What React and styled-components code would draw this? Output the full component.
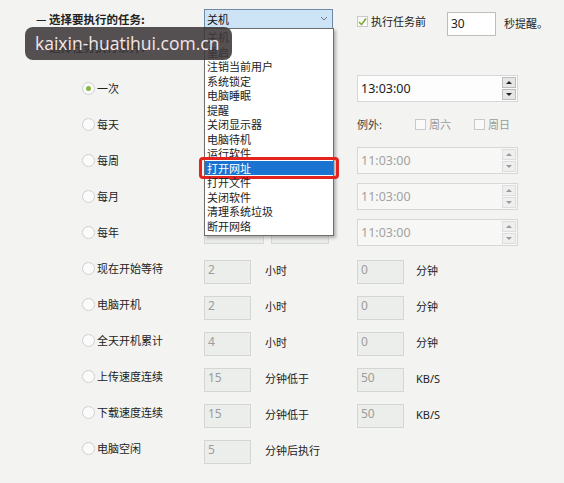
import styled, { createGlobalStyle } from 'styled-components';

const GlobalStyle = createGlobalStyle`
  html, body {
    margin: 0;
    padding: 0;
    background: #f3f4f1;
  }
  body {
    font-family: "Noto Sans CJK SC", "Noto Sans", sans-serif;
    color: #222;
  }
`;

const Page = styled.div`
  position: relative;
  width: 564px;
  height: 483px;
  overflow: hidden;
  background: #f3f4f1;
`;

const Header = styled.div`
  display: flex;
  align-items: flex-start;
  padding-top: 9px;
  height: 28px;
`;
const Heading = styled.div`
  width: 168px;
  margin-left: 36px;
  font-size: 11.5px;
  font-weight: bold;
  line-height: 20px;
  color: #222;
`;
const SubHeading = styled(Heading)`
  margin-top: 3px;
  line-height: 14px;
`;

const Combo = styled.div`
  position: relative;
  box-sizing: border-box;
  width: 129px;
  height: 20px;
  padding-left: 2px;
  border: 1px solid #6f8aa8;
  background: #cde3f6;
  font-size: 11px;
  line-height: 18px;
  color: #111;
`;
const Chevron = styled.svg`
  position: absolute;
  right: 4px;
  top: 6px;
`;
const List = styled.ul`
  position: absolute;
  z-index: 10;
  top: 18px;
  left: -1px;
  box-sizing: border-box;
  width: 130px;
  margin: 0;
  padding: 1px 0 2px;
  list-style: none;
  background: #fff;
  border: 1px solid #6e6e6e;
  box-shadow: 2px 2px 3px rgba(0, 0, 0, 0.28);
`;
const Item = styled.li`
  position: relative;
  height: 14.5px;
  padding-left: 2px;
  font-size: 11px;
  line-height: 14.5px;
  color: ${(p) => (p.$selected ? '#fff' : '#222')};
  background: ${(p) => (p.$selected ? '#1a73d1' : 'transparent')};

  ${(p) =>
    p.$selected &&
    `
    &::after {
      content: '';
      position: absolute;
      inset: -4px -6px -4px -6px;
      border: 3px solid #e2231f;
      border-radius: 4px;
    }
  `}
`;

const CheckLabel = styled.label`
  display: flex;
  align-items: center;
  gap: 3px;
  width: ${(p) => p.$width || 'auto'};
  margin-left: ${(p) => p.$left || '0'};
  margin-top: ${(p) => p.$top || '0'};
  font-size: 11px;
  line-height: 16px;
  color: ${(p) => (p.$muted ? '#9a9a9a' : '#222')};
`;
const Box = styled.span`
  display: inline-flex;
  align-items: center;
  justify-content: center;
  box-sizing: border-box;
  width: 11px;
  height: 11px;
  border: 1px solid #c9c9c9;
  background: #fafafa;
`;
const SecondsInput = styled.div`
  box-sizing: border-box;
  width: 49px;
  height: 24px;
  margin-top: 3px;
  padding-left: 3px;
  border: 1px solid #bdbdbd;
  background: #fff;
  font-family: "Noto Sans", sans-serif;
  font-size: 12px;
  line-height: 22px;
`;
const Text = styled.span`
  margin-left: ${(p) => p.$left || '0'};
  margin-top: ${(p) => p.$top || '0'};
  font-size: 11px;
  line-height: 16px;
  color: #222;
`;

const Rows = styled.div`
  margin-top: 16px;
`;
const Row = styled.div`
  display: flex;
  align-items: center;
  height: 36px;
  padding-left: 82px;
`;
const RadioCell = styled.label`
  display: flex;
  align-items: center;
  gap: 2px;
  width: 122px;
  font-size: 11px;
  color: #222;
`;
const Radio = styled.span`
  position: relative;
  box-sizing: border-box;
  width: 13px;
  height: 13px;
  border: 1px solid #cfcfcf;
  border-radius: 50%;
  background: #fbfbfb;

  ${(p) =>
    p.$checked &&
    `
    &::after {
      content: '';
      position: absolute;
      inset: 3px;
      border-radius: 50%;
      background: #86b83d;
    }
  `}
`;
const Middle = styled.div`
  display: flex;
  gap: 7px;
  width: 153px;
  align-self: flex-start;
  margin-top: ${(p) => p.$top || '0'};
`;
const DateBox = styled.div`
  box-sizing: border-box;
  width: ${(p) => p.$width};
  height: 26px;
  border: 1px solid #d6d8d5;
  background: #e9ebe8;
`;
const ValueBox = styled.div`
  box-sizing: border-box;
  width: 47px;
  height: 24px;
  align-self: flex-start;
  margin-top: 10px;
  padding: 1px 0 0 3px;
  border: 1px solid #d3d6d2;
  background: #eceeeb;
  font-family: "Noto Sans", sans-serif;
  font-size: 12px;
  line-height: 16px;
  color: #9c9c9c;
`;
const Unit = styled.span`
  width: ${(p) => p.$width || 'auto'};
  margin-left: ${(p) => p.$left || '0'};
  margin-top: 4px;
  font-size: 11px;
  color: #222;
  font-family: ${(p) => (p.$latin ? '"Noto Sans", sans-serif' : 'inherit')};
`;

const TimeField = styled.div`
  display: flex;
  align-items: center;
  justify-content: space-between;
  box-sizing: border-box;
  width: 161px;
  height: 27px;
  padding: 0 1px 0 3px;
  border: 1px solid #d7d7d7;
  background: ${(p) => (p.$disabled ? '#f7f7f6' : '#fdfdfd')};
  font-family: "Noto Sans", sans-serif;
  font-size: 12.5px;
  color: ${(p) => (p.$disabled ? '#a2a2a2' : '#1a1a1a')};
`;
const Spin = styled.div`
  display: flex;
  flex-direction: column;
  gap: 1px;
`;
const SpinButton = styled.span`
  position: relative;
  box-sizing: border-box;
  width: 14px;
  height: 11px;
  border: 1px solid ${(p) => (p.$disabled ? '#dedede' : '#bdbdbd')};
  background: ${(p) => (p.$disabled ? '#efefef' : '#e6e6e6')};

  &::after {
    content: '';
    position: absolute;
    left: 3px;
    top: 3px;
    border-left: 3px solid transparent;
    border-right: 3px solid transparent;
    ${(p) => (p.$down ? 'border-top' : 'border-bottom')}: 3px solid
      ${(p) => (p.$disabled ? '#9a9a9a' : '#222')};
  }
`;
const ExceptRow = styled.div`
  display: flex;
  align-items: center;
  font-size: 11px;
  color: #444;
`;

const Watermark = styled.div`
  position: absolute;
  z-index: 20;
  left: 25px;
  top: 27px;
  box-sizing: border-box;
  width: 207px;
  height: 33px;
  padding-left: 10px;
  border-radius: 8px;
  background: rgba(62, 56, 58, 0.88);
  font-family: "Open Sans", "Noto Sans", sans-serif;
  font-size: 17.5px;
  line-height: 33px;
  color: #f4e6e6;
  white-space: nowrap;
`;

const tasks = [
  '关机',
  '重启',
  '注销当前用户',
  '系统锁定',
  '电脑睡眠',
  '提醒',
  '关闭显示器',
  '电脑待机',
  '运行软件',
  '打开网址',
  '打开文件',
  '关闭软件',
  '清理系统垃圾',
  '断开网络',
];

const Check = () => (
  <svg width="9" height="9" viewBox="0 0 9 9">
    <polyline points="1,5 3.5,7.5 8,1.5" fill="none" stroke="#7cb02c" strokeWidth="1.6" />
  </svg>
);

const Time = ({ value, disabled }) => (
  <TimeField $disabled={disabled}>
    <span>{value}</span>
    <Spin>
      <SpinButton $disabled={disabled} />
      <SpinButton $disabled={disabled} $down />
    </Spin>
  </TimeField>
);

const waits = [
  { label: '现在开始等待', a: '2', mid: '小时', b: '0', unit: '分钟' },
  { label: '电脑开机', a: '2', mid: '小时', b: '0', unit: '分钟' },
  { label: '全天开机累计', a: '4', mid: '小时', b: '0', unit: '分钟' },
  { label: '上传速度连续', a: '15', mid: '分钟低于', b: '50', unit: 'KB/S' },
  { label: '下载速度连续', a: '15', mid: '分钟低于', b: '50', unit: 'KB/S' },
  { label: '电脑空闲', a: '5', mid: '分钟后执行' },
];

export default function App() {
  return (
    <Page>
      <GlobalStyle />
      <Header>
        <Heading>— 选择要执行的任务:</Heading>
        <Combo>
          关机
          <Chevron width="8" height="6" viewBox="0 0 8 6">
            <polyline points="1,1 4,4 7,1" fill="none" stroke="#777" strokeWidth="1" />
          </Chevron>
          <List>
            {tasks.map((t) => (
              <Item key={t} $selected={t === '打开网址'}>
                {t}
              </Item>
            ))}
          </List>
        </Combo>
        <CheckLabel $left="24px" $top="4px" $width="90px">
          <Box>
            <Check />
          </Box>
          执行任务前
        </CheckLabel>
        <SecondsInput>30</SecondsInput>
        <Text $left="8px" $top="6px">
          秒提醒。
        </Text>
      </Header>
      <SubHeading>— 选择任务执行条件:</SubHeading>

      <Rows>
        <Row>
          <RadioCell>
            <Radio $checked />
            一次
          </RadioCell>
          <Middle />
          <Time value="13:03:00" />
        </Row>
        <Row>
          <RadioCell>
            <Radio />
            每天
          </RadioCell>
          <Middle />
          <ExceptRow>
            例外:
            <CheckLabel $left="33px" $muted>
              <Box />
              周六
            </CheckLabel>
            <CheckLabel $left="23px" $muted>
              <Box />
              周日
            </CheckLabel>
          </ExceptRow>
        </Row>
        <Row>
          <RadioCell>
            <Radio />
            每周
          </RadioCell>
          <Middle />
          <Time value="11:03:00" disabled />
        </Row>
        <Row>
          <RadioCell>
            <Radio />
            每月
          </RadioCell>
          <Middle />
          <Time value="11:03:00" disabled />
        </Row>
        <Row>
          <RadioCell>
            <Radio />
            每年
          </RadioCell>
          <Middle $top="4px">
            <DateBox $width="60px" />
            <DateBox $width="58px" />
          </Middle>
          <Time value="11:03:00" disabled />
        </Row>

        {waits.map((w) => (
          <Row key={w.label}>
            <RadioCell>
              <Radio />
              {w.label}
            </RadioCell>
            <ValueBox>{w.a}</ValueBox>
            <Unit $left="14px" $width={w.b ? '92px' : 'auto'}>
              {w.mid}
            </Unit>
            {w.b && <ValueBox>{w.b}</ValueBox>}
            {w.unit && (
              <Unit $left="12px" $latin={w.unit === 'KB/S'}>
                {w.unit}
              </Unit>
            )}
          </Row>
        ))}
      </Rows>

      <Watermark>kaixin-huatihui.com.cn</Watermark>
    </Page>
  );
}
